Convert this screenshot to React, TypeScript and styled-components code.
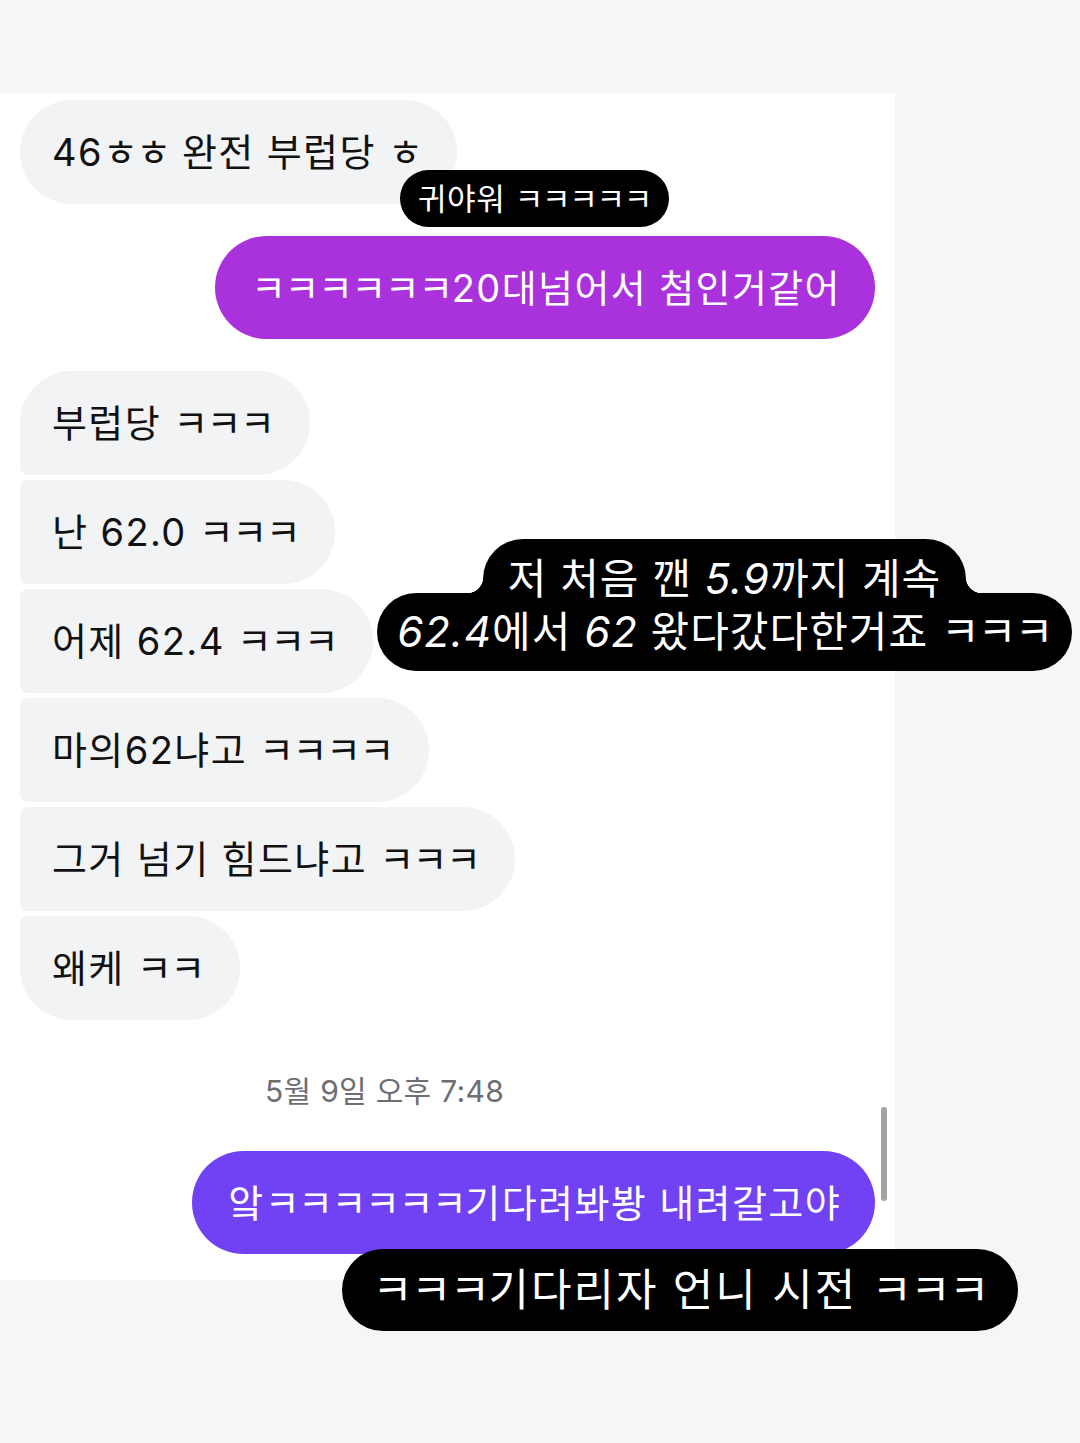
import React from 'react';
import styled, { createGlobalStyle, css } from 'styled-components';

const GlobalStyle = createGlobalStyle`
  body {
    margin: 0;
    background: #f6f6f9;
    font-family: Inter, 'Noto Sans CJK KR', 'Noto Sans', sans-serif;
  }
`;

type Pos = 'single' | 'first' | 'middle' | 'last';

const received = [
  '부럽당 ㅋㅋㅋ',
  '난 62.0 ㅋㅋㅋ',
  '어제 62.4 ㅋㅋㅋ',
  '마의62냐고 ㅋㅋㅋㅋ',
  '그거 넘기 힘드냐고 ㅋㅋㅋ',
  '왜케 ㅋㅋ',
];

//* ㅋ, ㅎ 같은 자모는 따로 감싸고, 캡션의 숫자는 기울여서
const rich = (text: string, italicNums = false) =>
  text.split(/([\u3131-\u318E]+|[0-9.]+)/).map((part, i) => {
    if (!part) return null;
    if (/^[\u3131-\u318E]+$/.test(part)) return <Jamo key={i}>{part}</Jamo>;
    if (italicNums && /^[0-9.]+$/.test(part)) return <Num key={i}>{part}</Num>;
    return <React.Fragment key={i}>{part}</React.Fragment>;
  });

const groupPos = (idx: number, total: number): Pos => {
  if (total === 1) return 'single';
  if (idx === 0) return 'first';
  if (idx === total - 1) return 'last';
  return 'middle';
};

const App = () => (
  <Page>
    <GlobalStyle />
    <Panel>
      <ReceivedBubble pos="single">{rich('46ㅎㅎ 완전 부럽당 ㅎ')}</ReceivedBubble>

      <SentBubble tone="magenta">{rich('ㅋㅋㅋㅋㅋㅋ20대넘어서 첨인거같어')}</SentBubble>

      <Group>
        {received.map((msg, i) => (
          <ReceivedBubble key={msg} pos={groupPos(i, received.length)}>
            {rich(msg)}
          </ReceivedBubble>
        ))}
      </Group>

      <Timestamp>5월 9일 오후 7:48</Timestamp>

      <SentBubble tone="violet">{rich('앜ㅋㅋㅋㅋㅋㅋ기다려봐봥 내려갈고야')}</SentBubble>

      <Scrollbar />
    </Panel>

    <SmallCaption>{rich('귀야워 ㅋㅋㅋㅋㅋ')}</SmallCaption>

    <StackedCaption>
      <CaptionTop>
        <CaptionText>{rich('저 처음 깬 5.9까지 계속', true)}</CaptionText>
      </CaptionTop>
      <CaptionBottom>
        <CaptionText>{rich('62.4에서 62 왔다갔다한거죠 ㅋㅋㅋ', true)}</CaptionText>
      </CaptionBottom>
    </StackedCaption>

    <BottomCaption>{rich('ㅋㅋㅋ기다리자 언니 시전 ㅋㅋㅋ')}</BottomCaption>
  </Page>
);

const Page = styled.div`
  position: relative;
  width: 1080px;
  height: 1443px;
  padding-top: 93px;
  box-sizing: border-box;
  background: #f6f6f9;
  overflow: hidden;
`;

const Panel = styled.div`
  position: relative;
  width: 895px;
  height: 1187px;
  box-sizing: border-box;
  padding: 7px 20px 0;
  background: #ffffff;
  display: flex;
  flex-direction: column;
  align-items: flex-start;
`;

const Jamo = styled.span`
  letter-spacing: -0.04em;
`;

const Num = styled.span`
  font-style: italic;
`;

const bubbleText = css`
  box-sizing: border-box;
  width: fit-content;
  height: 104px;
  padding-top: 28px;
  font-size: 38px;
  letter-spacing: 1.4px;
  line-height: 48px;
  white-space: nowrap;
`;

const radiusFor = (pos: Pos) => {
  switch (pos) {
    case 'first':
      return '52px 52px 52px 8px';
    case 'middle':
      return '8px 52px 52px 8px';
    case 'last':
      return '8px 52px 52px 52px';
    default:
      return '52px';
  }
};

const ReceivedBubble = styled.div<{ pos: Pos }>`
  ${bubbleText}
  padding-left: 32px;
  padding-right: 36px;
  background: #f2f3f5;
  color: #111111;
  border-radius: ${({ pos }) => radiusFor(pos)};
`;

const SentBubble = styled.div<{ tone: 'magenta' | 'violet' }>`
  ${bubbleText}
  align-self: flex-end;
  height: 103px;
  margin-top: 32px;
  padding-left: 36px;
  padding-right: 34px;
  border-radius: 52px;
  color: #ffffff;
  background: ${({ tone }) => (tone === 'magenta' ? '#a932dc' : '#7141f4')};
`;

const Group = styled.div`
  margin-top: 32px;
  display: flex;
  flex-direction: column;
  align-items: flex-start;
  gap: 5px;
`;

const Timestamp = styled.div`
  margin: 54px 0 0 245px;
  font-size: 30px;
  letter-spacing: 0.3px;
  line-height: 34px;
  color: #6d6d72;
  & + div {
    margin-top: 43px;
  }
`;

const Scrollbar = styled.div`
  position: absolute;
  right: 8px;
  top: 1014px;
  width: 6px;
  height: 94px;
  border-radius: 3px;
  background: #a3a3a6;
`;

const captionText = css`
  position: absolute;
  box-sizing: border-box;
  width: fit-content;
  background: #000000;
  color: #ffffff;
  white-space: nowrap;
  text-align: center;
`;

const SmallCaption = styled.div`
  ${captionText}
  left: 400px;
  top: 170px;
  height: 57px;
  padding: 0 18px;
  line-height: 57px;
  border-radius: 29px;
  font-size: 31px;
  letter-spacing: 0.6px;
`;

const StackedCaption = styled.div`
  position: absolute;
  left: 377px;
  top: 539px;
  width: 695px;
  display: flex;
  flex-direction: column;
  align-items: center;
  font-size: 42px;
  letter-spacing: 1px;
`;

// 두 줄의 검은 배경이 겹쳐도 글자는 항상 위에
const CaptionText = styled.span`
  position: relative;
  z-index: 1;
`;

const CaptionTop = styled.div`
  ${captionText}
  position: relative;
  height: 80px;
  line-height: 80px;
  padding: 0 25px;
  border-radius: 40px 40px 16px 16px;

  &::before,
  &::after {
    content: '';
    position: absolute;
    bottom: 26px;
    width: 16px;
    height: 16px;
  }
  &::before {
    left: -16px;
    background: radial-gradient(circle at 0 0, transparent 16px, #000 16.5px);
  }
  &::after {
    right: -16px;
    background: radial-gradient(circle at 100% 0, transparent 16px, #000 16.5px);
  }
`;

const CaptionBottom = styled.div`
  ${captionText}
  position: relative;
  margin-top: -26px;
  width: 100%;
  height: 78px;
  line-height: 78px;
  border-radius: 39px;
`;

const BottomCaption = styled.div`
  ${captionText}
  left: 342px;
  top: 1249px;
  width: 676px;
  height: 82px;
  line-height: 82px;
  border-radius: 41px;
  font-size: 44px;
  letter-spacing: 2px;
`;

export default App;
